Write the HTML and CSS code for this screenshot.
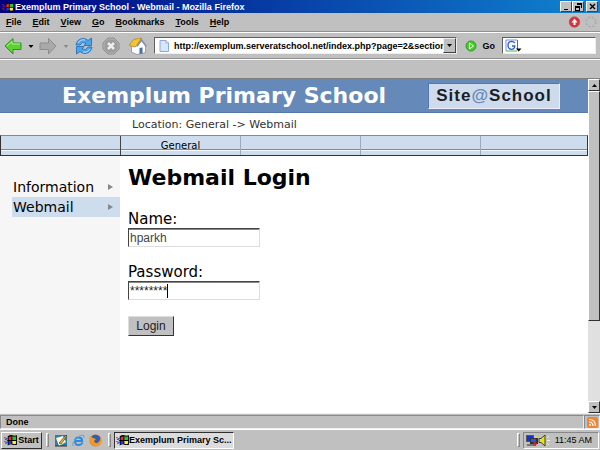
FILE: index.html
```html
<!DOCTYPE html>
<html lang="en">
<head>
  <meta charset="UTF-8">
  <meta name="viewport" content="width=device-width, initial-scale=1.0">
  <title>Exemplum Primary School - Webmail</title>
  <link rel="stylesheet" href="styles.css">
</head>
<body>
  <!-- Windows flag, used in the title bar and the taskbar -->
  <svg width="0" height="0" class="defs">
    <symbol id="flag" viewBox="0 0 14 12">
      <path d="M0 3h2v1H0zM1 5h2v1H1zM0 7h2v1H0zM1 9h2v1H1z" fill="#c22"/>
      <path d="M2 4h2v1H2zM3 6h2v1H3zM2 8h2v1H2z" fill="#23c"/>
      <path d="M4 2q3-2 5-1t5 0v10q-3 1-5 0t-5 1z" fill="#000"/>
      <path d="M5 3q2-1 3-1v4H5z" fill="#f22"/>
      <path d="M9 2q2 1 4 0v4H9z" fill="#1c3"/>
      <path d="M5 7h3v3q-2 0-3 1z" fill="#23f"/>
      <path d="M9 7h4v3q-2 1-4 0z" fill="#fe2"/>
    </symbol>
  </svg>

  <header class="titlebar">
    <svg class="flag" width="12" height="10"><use href="#flag"/></svg>
    <span class="title">Exemplum Primary School - Webmail - Mozilla Firefox</span>
    <div class="win-buttons">
      <button aria-label="Minimize"><svg width="9" height="8"><path d="M2 6h4v1H2z"/></svg></button>
      <button aria-label="Restore"><svg width="9" height="8"><path d="M3 0h5v5H7V2H3zM1 3h5v5H1zM2 5v2h3V5z" fill-rule="evenodd"/></svg></button>
      <button aria-label="Close" class="close"><svg width="9" height="8"><path d="M2 1l5 5M7 1L2 6" stroke="#000" stroke-width="1.4"/></svg></button>
    </div>
  </header>

  <nav class="menubar">
    <a href="#"><u>F</u>ile</a>
    <a href="#"><u>E</u>dit</a>
    <a href="#"><u>V</u>iew</a>
    <a href="#"><u>G</u>o</a>
    <a href="#"><u>B</u>ookmarks</a>
    <a href="#"><u>T</u>ools</a>
    <a href="#"><u>H</u>elp</a>
    <svg class="throbbers" width="30" height="14" viewBox="0 0 30 14">
      <circle cx="6.500" cy="7" r="5.300" fill="#d8323c" stroke="#a8525a" stroke-width=".6"/>
      <path d="M6.500 3.500l3 4h-2V10h-2V7.500h-2z" fill="#fff"/>
      <circle cx="23" cy="7" r="4.800" fill="none" stroke="#adadad" stroke-width="2" stroke-dasharray="2.200 1.570"/>
    </svg>
  </nav>

  <div class="toolbar">
    <button class="tool back" aria-label="Back">
      <svg width="30" height="18" viewBox="0 0 30 18">
        <path d="M1 9L9 1.500V6h8v6.500H9V17z" fill="#5bd32f" stroke="#2b9420"/>
        <path d="M3 9l5-4.500V7h8" fill="none" stroke="#b5f08f"/>
        <path d="M24.500 8h5l-2.500 3z"/>
      </svg>
    </button>
    <button class="tool forward" aria-label="Forward">
      <svg width="30" height="18" viewBox="0 0 30 18">
        <path d="M17 9L9.500 1.500V6H1v6.500h8.500V17z" fill="#a9a9a9" stroke="#8d8d8d"/>
        <path d="M24.500 8h5l-2.500 3z" fill="#8a8a8a"/>
      </svg>
    </button>
    <button class="tool reload" aria-label="Reload">
      <svg width="18" height="18" viewBox="0 0 18 18">
        <path d="M1 8q1-6 7-6.500 3 0 5 2L16.500 1v7.500H9l2-2.500q-4-2-6 2z" fill="#4ba5ec" stroke="#1d68b8" stroke-width=".8"/>
        <path d="M17 10q-1 6-7 6.500-3 0-5-2L1.500 17V9.500H9L7 12q4 2 6-2z" fill="#4ba5ec" stroke="#1d68b8" stroke-width=".8"/>
        <path d="M3 6q2-4 7-3M15 12q-2 4-7 3" fill="none" stroke="#bfe2ff"/>
      </svg>
    </button>
    <button class="tool stop" aria-label="Stop">
      <svg width="18" height="18" viewBox="0 0 18 18">
        <path d="M6 1h6l5 5v6l-5 5H6l-5-5V6z" fill="#9c9c9c" stroke="#8a8a8a"/>
        <path d="M6 2h6l4 4v6l-4 4H6l-4-4V6z" fill="none" stroke="#b4b4b4"/>
        <path d="M6 6l6 6M12 6l-6 6" stroke="#eee" stroke-width="2.500"/>
      </svg>
    </button>
    <button class="tool home" aria-label="Home">
      <svg width="18" height="18" viewBox="0 0 18 18">
        <path d="M2.500 8.500v6.500l5.500 2.500 8.500-2V9l-4-5.500L8 9z" fill="#fafcff" stroke="#7b8ba8" stroke-width=".7"/>
        <path d="M10.500 17v-6l3-.6v6z" fill="#4a6ea8"/>
        <path d="M7.500 8L12.500 1.500 18 9l-1 1-4.500-5.500L8.500 10z" fill="#8794ad"/>
        <path d="M0 8.500L4.500 2.500 12.500 1 7.500 8.500 6 10z" fill="#f6c331" stroke="#b08316" stroke-width=".7"/>
      </svg>
    </button>
    <div class="address">
      <svg width="11" height="12" viewBox="0 0 11 12">
        <path d="M1 .5h6L9.500 3v8.500H1z" fill="#d6e6fb" stroke="#8fa9d6"/>
        <path d="M7 .5V3h2.500" fill="#fff" stroke="#8fa9d6"/>
      </svg>
      <input type="text" aria-label="Address" value="http://exemplum.serveratschool.net/index.php?page=2&amp;section=8">
      <button class="drop" aria-label="Show history"><svg width="7" height="4"><path d="M1 0h5L3.500 3z"/></svg></button>
    </div>
    <button class="go">
      <svg width="12" height="12" viewBox="0 0 12 12">
        <circle cx="6" cy="6" r="5" fill="#4cc92f" stroke="#2f9c20"/>
        <path d="M4.500 3v6L8.500 6z" fill="#4cc92f" stroke="#fff"/>
      </svg>
      Go
    </button>
    <div class="search">
      <svg width="17" height="13" viewBox="0 0 17 13">
        <path d="M1 12V1h11" fill="none" stroke="#6b93e8"/>
        <path d="M1 12h11" stroke="#4fb84f"/>
        <path d="M12.500 1v9" stroke="#e33"/>
        <path d="M9.800 4Q8.500 2.300 6.500 2.300 3 2.500 3 6.300T6.500 10.300Q9.500 10.300 9.800 7H7" fill="none" stroke="#2f5ed0" stroke-width="1.300"/>
        <path d="M11 9.500h5.500L13.700 12.500z"/>
      </svg>
      <input type="text" aria-label="Search">
    </div>
  </div>
  <div class="bookmarks"></div>

  <div class="viewport">
    <div class="page">
      <div class="banner">
        <h1>Exemplum Primary School</h1>
        <a href="#" class="logo">Site<span>@</span>School</a>
      </div>
      <div class="location"><p>Location: General -&gt; Webmail</p></div>
      <nav class="tabs">
        <span></span>
        <a href="#">General</a>
        <span></span>
        <span></span>
        <span></span>
      </nav>
      <div class="columns">
        <nav class="side">
          <a href="#">Information <svg width="5" height="7"><path d="M0 0v6l5-3z"/></svg></a>
          <a href="#" class="active">Webmail <svg width="5" height="7"><path d="M0 0v6l5-3z"/></svg></a>
        </nav>
        <main>
          <h2>Webmail Login</h2>
          <form>
            <label for="name">Name:</label>
            <input type="text" id="name" value="hparkh">
            <label for="password">Password:</label>
            <!-- browsers mask with bullets, the asterisks and caret lie over the field -->
            <div class="field">
              <input type="password" id="password" value="exemplum">
              <span class="mask" aria-hidden="true">********</span>
            </div>
            <button type="submit">Login</button>
          </form>
        </main>
      </div>
    </div>
    <div class="scrollbar">
      <button aria-label="Scroll up"><svg width="5" height="3"><path d="M0 3h5L2.500 0z"/></svg></button>
      <div class="thumb"></div>
      <div class="track"></div>
      <button aria-label="Scroll down"><svg width="5" height="3"><path d="M0 0h5L2.500 3z"/></svg></button>
    </div>
  </div>

  <div class="statusbar">
    <span class="status">Done</span>
    <button class="feed" aria-label="Subscribe">
      <svg width="11" height="11" viewBox="0 0 11 11">
        <rect width="11" height="11" rx="2" fill="#f2852b"/>
        <circle cx="3" cy="8" r="1" fill="#fff"/>
        <path d="M2 5q4 0 4 4M2 2.500q6.500 0 6.500 6.500" fill="none" stroke="#fff" stroke-width="1.200"/>
      </svg>
    </button>
  </div>

  <footer class="taskbar">
    <button class="start"><svg width="13" height="12"><use href="#flag"/></svg>Start</button>
    <i class="grip"></i>
    <div class="quick">
      <svg width="13" height="13" viewBox="0 0 13 13">
        <path d="M0 1h12v11H0z" fill="#2d7fa8"/>
        <path d="M1 4l7-2 3 6-7 4z" fill="#fff8d8"/>
        <path d="M4 9l7-8 1 1-6 8z" fill="#e8b640" stroke="#222" stroke-width=".6"/>
        <path d="M0 12h12" stroke="#333"/>
      </svg>
      <svg width="13" height="13" viewBox="0 0 13 13">
        <path d="M10.500 8.500Q9.500 11 6.500 11 3 11 3 7.200T6.700 3.500Q10 3.500 10.200 7H4" fill="none" stroke="#2b8be0" stroke-width="2"/>
        <path d="M1.500 12Q-1 10 4 5T12 1.500Q12.500 2.500 11.500 4" fill="none" stroke="#4aa8ee" stroke-width="1"/>
      </svg>
      <svg width="13" height="13" viewBox="0 0 13 13">
        <circle cx="6.500" cy="6.500" r="6" fill="#e2701b"/>
        <path d="M3 2q4-3 8 1 1 4-3 6-5 0-5-4z" fill="#2f5fb0"/>
        <path d="M1 2l3 2 3 1-2 2q1 3 4 2 3-2 2-6 3 3 1 7-3 3-7 2-6-3-4-10z" fill="#f39a26"/>
      </svg>
    </div>
    <i class="grip"></i>
    <button class="task"><svg width="13" height="12"><use href="#flag"/></svg>Exemplum Primary Sc...</button>
    <i class="grip tray-grip"></i>
    <div class="tray">
      <svg width="12" height="13" viewBox="0 0 12 13">
        <path d="M0 1h8v7H0z" fill="#555"/>
        <path d="M1 2h6v5H1z" fill="#1130e0"/>
        <path d="M4 4h8v6H4z" fill="#333"/>
        <path d="M5 5h5v3H5z" fill="#2a52ff"/>
        <path d="M1 10h9v2H1z" fill="#777"/>
        <path d="M8 8l3 1-1 3-3-1z" fill="#d22"/>
        <path d="M9 2h2v2H9z" fill="#dd3"/>
      </svg>
      <svg width="13" height="13" viewBox="0 0 13 13">
        <path d="M1 4.500h2L7 1v11L3 8.500H1z" fill="#e6e02a" stroke="#222" stroke-width=".8"/>
        <path d="M9 4l2-2M9 6.500h3M9 9l2 2" stroke="#eee"/>
      </svg>
      <time>11:45 AM</time>
    </div>
  </footer>
</body>
</html>
```
FILE: styles.css
```css
* { box-sizing: border-box; }
body { display: flex; flex-direction: column; height: 100vh; margin: 0; overflow: hidden; background: #c0c0c0; color: #000; font: bold 9px/12px "Liberation Sans", Arial, sans-serif; }
a { color: inherit; text-decoration: none; }
button { display: flex; align-items: center; justify-content: center; margin: 0; padding: 0; border: 0; background: #c0c0c0; color: inherit; font: inherit; }
input { min-width: 0; margin: 0; padding: 0; border: 0; background: #fff; color: inherit; font: inherit; }
svg { display: block; flex: none; }
.defs { position: absolute; }

.titlebar { display: flex; align-items: center; flex: none; height: 13px; padding: 0 2px; background: linear-gradient(to right, #000080, #1084d0); color: #fff; }
.titlebar .title { flex: 1; padding-left: 1px; white-space: nowrap; }
.win-buttons { display: flex; }
.win-buttons button { width: 12px; height: 11px; border: 1px solid; border-color: #fff #404040 #404040 #fff; }
.win-buttons .close { margin-left: 2px; }

.menubar { display: flex; align-items: center; flex: none; gap: 11px; height: 19px; padding: 0 2px 0 6px; border-bottom: 1px solid #909090; }
.throbbers { margin-left: auto; }

.toolbar { display: flex; align-items: center; flex: none; height: 27px; padding: 0 4px; border-top: 1px solid #fff; border-bottom: 1px solid #909090; }
.tool { background: none; }
.forward { margin-left: 5px; }
.reload { margin-left: 6px; }
.stop, .home { margin-left: 9px; }
.address, .search { display: flex; align-items: center; height: 17px; border: 1px solid; border-color: #606060 #eee #eee #606060; background: #fff; }
.address { flex: 1; margin-left: 7px; padding-left: 4px; }
.address input { flex: 1; margin-left: 4px; }
.drop { width: 13px; height: 15px; border: 1px solid; border-color: #eee #404040 #404040 #eee; }
.go { gap: 6px; margin: 0 7px 0 8px; }
.search { width: 94px; padding-left: 2px; }
.search input { flex: 1; }
.bookmarks { flex: none; height: 20px; border-top: 1px solid #fff; border-bottom: 1px solid #808080; }

.viewport { display: flex; flex: 1; min-height: 0; }
.page { display: flex; flex-direction: column; flex: 1; background: #fff; font: 14px/20px "DejaVu Sans", Verdana, sans-serif; }
.banner { display: flex; align-items: center; justify-content: space-between; height: 34px; padding: 0 28px 0 62px; border-bottom: 1px solid #5578a8; background: #6589b9; }
.banner h1 { margin: 0; color: #fff; font-size: 22px; line-height: 30px; white-space: nowrap; }
.logo { display: flex; justify-content: center; width: 132px; height: 26px; border: 1px solid; border-color: #5578a8 #eef #eef #5578a8; background: #cddbec; color: #1a1e24; font: bold 17px/23px "Liberation Sans", Arial, sans-serif; letter-spacing: 1px; }
.logo span { color: #6589b9; }
.location { height: 22px; padding-left: 120px; background: linear-gradient(to right, #f6f6f6 120px, #fff 120px); color: #333; }
.location p { margin: 0; padding-left: 12px; font-size: 11px; line-height: 24px; }
.tabs { display: flex; height: 21px; border: 1px solid #333; border-top-color: #888; background: linear-gradient(#cedded 13px, #7d8ba0 13px, #7d8ba0 14px, #f4f8fc 14px, #f4f8fc 15px, #cedded 15px); font-size: 10px; line-height: 20px; text-align: center; }
.tabs > * { flex: 0 0 120px; border-right: 1px solid #9dabc0; }
.tabs > :first-child { border-color: #444; }
.tabs > :last-child { flex: 1; border: 0; }
.columns { display: flex; flex: 1; }
.side { width: 120px; padding: 21px 0 0 12px; background: #f6f6f6; }
.side a { display: flex; align-items: center; justify-content: space-between; height: 20px; padding: 0 7px 0 1px; }
.side svg { fill: #888; }
.side .active { background: #cedded; }
main { padding: 8px; }
main h2 { margin: 0; font-size: 22px; line-height: 28px; }
form { display: flex; flex-direction: column; align-items: flex-start; padding-top: 18px; }
label { font-size: 15px; line-height: 18px; }
form input { display: block; width: 132px; height: 19px; margin-bottom: 16px; padding: 0 1px; border: 1px solid; border-color: #444 #ddd #ddd #444; color: #444; font: 12px/15px "Liberation Sans", Arial, sans-serif; box-shadow: inset 0 1px #888; }
.field { position: relative; }
.field input { color: transparent; }
.mask { position: absolute; top: 3px; left: 2px; height: 14px; border-right: 1px solid #000; color: #222; font: 12px/14px "Liberation Sans", Arial, sans-serif; }
form button { width: 46px; height: 20px; border: 1px solid; border-color: #ddd #333 #333 #ddd; color: #222; font: 12px/16px "Liberation Sans", Arial, sans-serif; }

.scrollbar { display: flex; flex-direction: column; width: 12px; background: #e0e0e0; }
.scrollbar button, .thumb { border: 1px solid; border-color: #fff #303030 #303030 #fff; background: #c0c0c0; }
.scrollbar button { height: 12px; }
.thumb { flex: 37; }
.track { flex: 13; }

.statusbar { display: flex; flex: none; height: 16px; padding-top: 1px; border-top: 1px solid #f0f0f0; }
.status { flex: 1; padding-left: 5px; border: 1px solid; border-color: #888 #eee #eee #888; }
.feed { width: 16px; border: 1px solid; border-color: #888 #eee #eee #888; }

.taskbar { display: flex; align-items: center; flex: none; height: 21px; padding: 0 1px; border-top: 1px solid #fff; }
.start { width: 41px; height: 17px; gap: 1px; border: 1px solid; border-color: #fff #303030 #303030 #fff; }
.grip { width: 3px; height: 14px; margin: 0 3px 0 4px; border: 1px solid; border-color: #fff #888 #888 #fff; }
.quick { display: flex; gap: 4px; padding: 0 2px 0 3px; }
.task { justify-content: flex-start; width: 120px; height: 17px; padding-left: 1px; border: 1px solid; border-color: #303030 #fff #fff #303030; background: #dcdcdc; white-space: nowrap; }
.tray-grip { margin-left: auto; }
.tray { display: flex; align-items: center; height: 17px; padding: 0 6px 0 2px; border: 1px solid; border-color: #888 #fff #fff #888; font-weight: normal; }
.tray time { padding-left: 4px; }
```
